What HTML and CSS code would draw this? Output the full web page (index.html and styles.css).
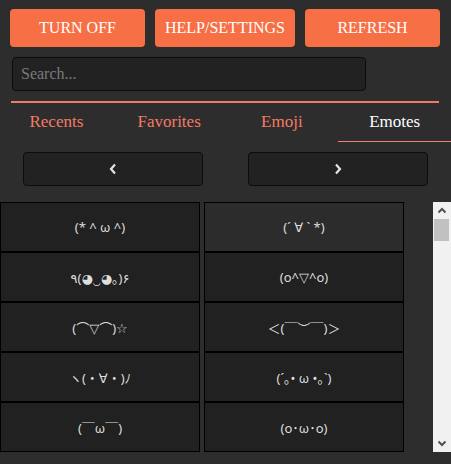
FILE: index.html
```html
<!DOCTYPE html>
<html>
<head>
<meta charset="utf-8">
<link rel="stylesheet" href="styles.css">
</head>
<body>
<div class="app">
  <div class="actions">
    <button class="action">TURN OFF</button>
    <button class="action">HELP/SETTINGS</button>
    <button class="action">REFRESH</button>
  </div>
  <div class="search-row">
    <input class="search" type="text" placeholder="Search...">
  </div>
  <div class="divider"></div>
  <nav class="tabs">
    <div class="tab">Recents</div>
    <div class="tab">Favorites</div>
    <div class="tab">Emoji</div>
    <div class="tab active">Emotes</div>
  </nav>
  <div class="pager">
    <div class="pager-cell">
      <button class="pager-btn" aria-label="Previous">
        <svg width="8" height="12" viewBox="0 0 8 12"><polyline points="6,1.5 2,6 6,10.5" fill="none" stroke="#e4e4e4" stroke-width="2.2"/></svg>
      </button>
    </div>
    <div class="pager-cell">
      <button class="pager-btn" aria-label="Next">
        <svg width="8" height="12" viewBox="0 0 8 12"><polyline points="2,1.5 6,6 2,10.5" fill="none" stroke="#e4e4e4" stroke-width="2.2"/></svg>
      </button>
    </div>
  </div>
  <div class="list-area">
    <div class="grid">
      <div class="cell">(* ^ ω ^)</div>
      <div class="cell hover">(´ ∀ ` *)</div>
      <div class="cell">٩(◕‿◕｡)۶</div>
      <div class="cell">(o^▽^o)</div>
      <div class="cell">(⌒▽⌒)☆</div>
      <div class="cell">＜(￣︶￣)＞</div>
      <div class="cell">ヽ(・∀・)ﾉ</div>
      <div class="cell">(´｡• ω •｡`)</div>
      <div class="cell">(￣ω￣)</div>
      <div class="cell">(o･ω･o)</div>
    </div>
    <div class="scrollbar">
      <div class="sb-btn">
        <svg width="10" height="7" viewBox="0 0 10 7"><polyline points="1.5,5.5 5,2 8.5,5.5" fill="none" stroke="#505050" stroke-width="2"/></svg>
      </div>
      <div class="sb-track"><div class="sb-thumb"></div></div>
      <div class="sb-btn">
        <svg width="10" height="7" viewBox="0 0 10 7"><polyline points="1.5,1.5 5,5 8.5,1.5" fill="none" stroke="#505050" stroke-width="2"/></svg>
      </div>
    </div>
  </div>
</div>
</body>
</html>
```

FILE: styles.css
```css
html, body {
  margin: 0;
  padding: 0;
  background: #2d2d2d;
  width: 451px;
  height: 464px;
  overflow: hidden;
}

.app {
  font-family: "Liberation Serif", "Times New Roman", serif;
}

.actions {
  display: grid;
  grid-template-columns: 135px 140px 135px;
  column-gap: 10px;
  padding: 9px 0 0 10px;
}

.action {
  height: 38px;
  background: #f76f45;
  color: #ffffff;
  border: none;
  border-radius: 4px;
  font-family: inherit;
  font-size: 16px;
  padding: 0;
}

.search-row {
  padding: 10px 0 0 12px;
}

.search {
  display: block;
  box-sizing: border-box;
  width: 354px;
  height: 34px;
  background: #222222;
  border: 1px solid #0c0c0c;
  border-radius: 4px;
  color: #ddd;
  font-family: inherit;
  font-size: 16px;
  padding: 0 8px;
  outline: none;
}

.search::placeholder {
  color: #7a7a7a;
}

.divider {
  margin: 10px 12px 0 11px;
  height: 2px;
  background: #f57a66;
}

.tabs {
  display: grid;
  grid-template-columns: repeat(4, 1fr);
}

.tab {
  text-align: center;
  font-size: 17px;
  line-height: 20px;
  padding: 9px 0 9px;
  color: #f57a66;
  border-bottom: 1px solid transparent;
}

.tab.active {
  color: #ffffff;
  border-bottom-color: #f0806e;
}

.pager {
  display: grid;
  grid-template-columns: 1fr 1fr;
  padding-top: 10px;
}

.pager-cell {
  display: flex;
  justify-content: center;
}

.pager-btn {
  width: 80%;
  height: 34px;
  background: #222222;
  border: 1px solid #0c0c0c;
  border-radius: 4px;
  display: flex;
  align-items: center;
  justify-content: center;
  padding: 0;
}

.list-area {
  display: flex;
  justify-content: space-between;
  margin-top: 16px;
  height: 250px;
}

.grid {
  display: grid;
  grid-template-columns: 200px 200px;
  grid-auto-rows: 50px;
  column-gap: 4px;
  width: 404px;
}

.cell {
  box-sizing: border-box;
  border: 1px solid #000;
  background: #212121;
  color: #dedede;
  font-family: "Noto Sans", "DejaVu Sans", "Noto Sans CJK JP", sans-serif;
  font-size: 13px;
  display: flex;
  align-items: center;
  justify-content: center;
}

.cell.hover {
  background: #2c2c2c;
}

.scrollbar {
  width: 18px;
  background: #f1f1f1;
  display: flex;
  flex-direction: column;
}

.sb-btn {
  height: 17px;
  display: flex;
  align-items: center;
  justify-content: center;
}

.sb-track {
  flex: 1;
  padding: 0 2px 0 1px;
}

.sb-thumb {
  height: 22px;
  background: #c1c1c1;
}
```
